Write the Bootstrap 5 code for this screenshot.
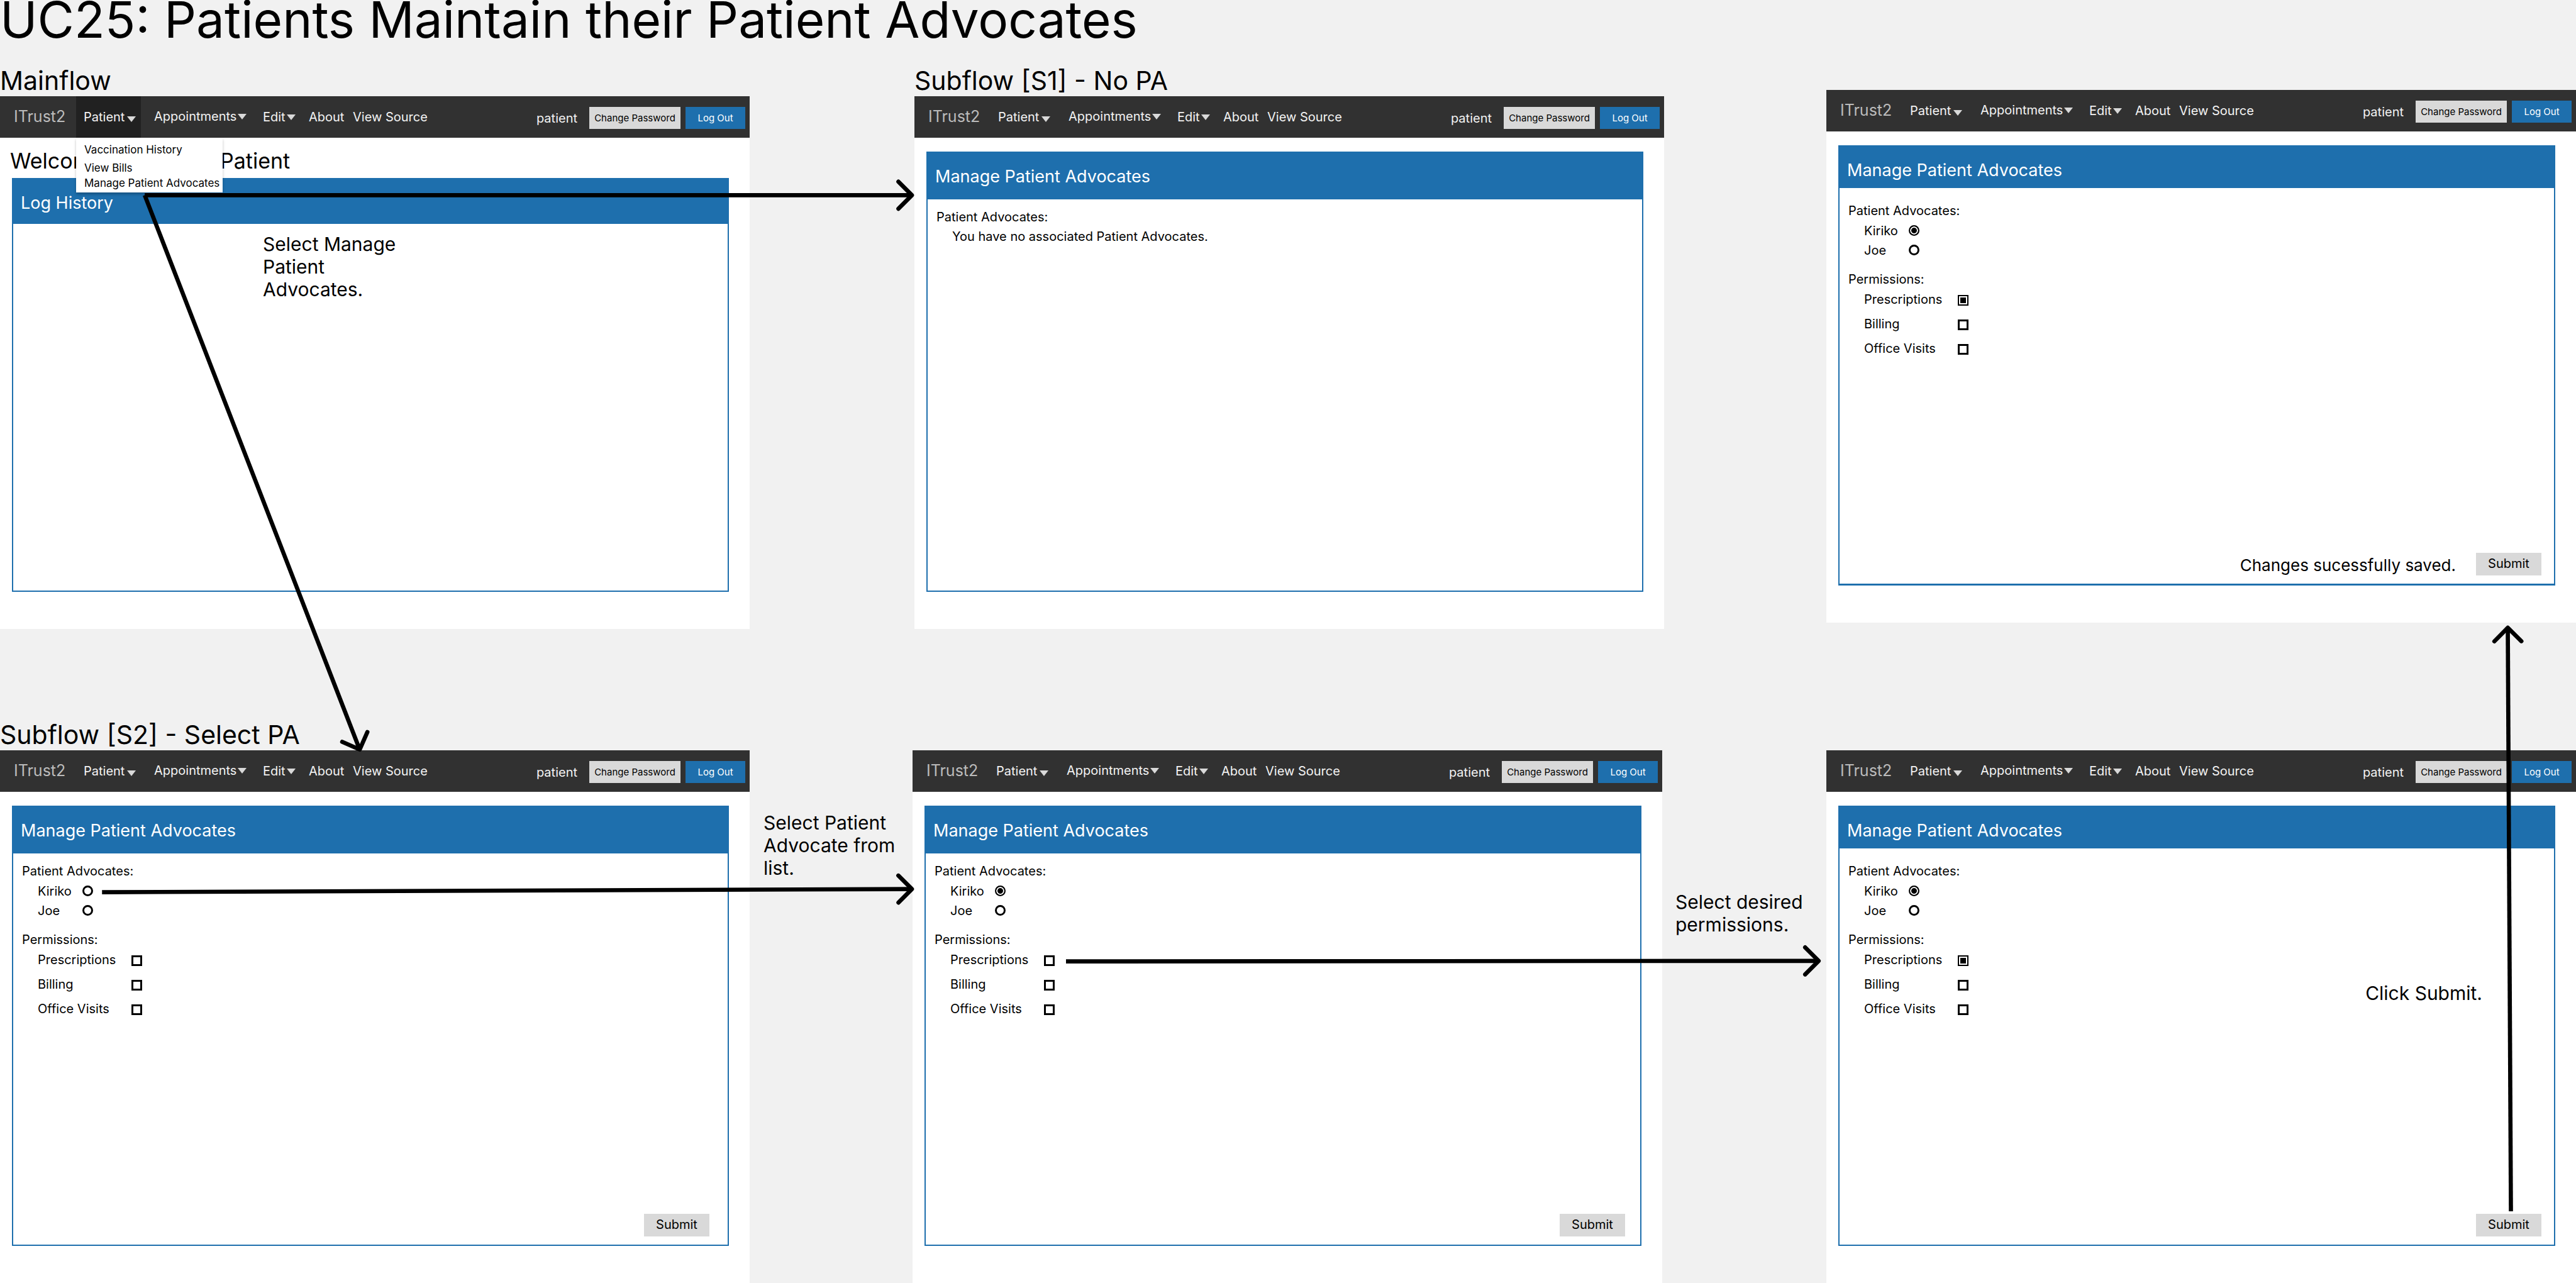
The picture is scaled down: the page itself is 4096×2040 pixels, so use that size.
<!DOCTYPE html>
<html lang="en">
<head>
<meta charset="utf-8">
<meta name="viewport" content="width=device-width, initial-scale=1">
<title>UC25: Patients Maintain their Patient Advocates</title>
<link href="https://cdn.jsdelivr.net/npm/bootstrap@5.3.0/dist/css/bootstrap.min.css" rel="stylesheet">
<style>
  body { background: #f1f1f1; color: #000; font-family: Inter, "Liberation Sans", sans-serif; font-size: 20px; line-height: 24px; }
  .board-title { font-size: 80px; line-height: 78px; font-weight: 400; margin: -8px 0 0; padding-bottom: 8px; }
  .flow-label { font-size: 41px; line-height: 48px; font-weight: 400; margin: 0; padding-top: 9px; white-space: nowrap; }
  .flow-row { align-items: flex-start; }
  .flow-top { margin-top: 17px; }
  .flow-bottom { margin-top: 135px; }
  .screen { flex: 1 1 0; min-width: 0; display: flex; flex-direction: column; }
  .label-space { height: 58px; }
  .label-space.raised { height: 48px; }
  .gutter-a { flex: 0 0 262px; }
  .gutter-b { flex: 0 0 258px; }
  .gutter-c { flex: 0 0 259px; }
  .gutter-d { flex: 0 0 261px; }
  .app { background: #fff; height: 847px; display: flex; flex-direction: column; position: relative; }

  .topbar { background: #313131; height: 66px; padding: 0 7px 0 22px; flex-wrap: nowrap; align-items: stretch; justify-content: flex-start; }
  .topbar .brand-name { color: #bbb; font-size: 25px; line-height: 32px; padding-top: 16px; width: 99px; text-decoration: none; }
  .topbar .menu-link { color: #f3f3f3; font-size: 20px; line-height: 24px; text-decoration: none; display: flex; align-items: center; white-space: nowrap; padding: 0; }
  .menu-patient { width: 103px; gap: 4px; padding-left: 12px !important; }
  .menu-patient.opened { background: #212121; }
  .menu-appts { margin-left: 21px; width: 173px; gap: 2px; padding-bottom: 2px !important; }
  .menu-edit { width: 73px; gap: 2px; }
  .menu-about { width: 70px; }
  .tri { width: 14px; height: 9px; fill: #d9d9d9; flex: none; }
  .menu-patient .tri { margin-top: 6px; }
  .who { color: #f3f3f3; font-size: 20px; line-height: 24px; padding-top: 23px; }
  .bar-btn { border: 0; border-radius: 0; height: 35px; font-size: 15px; line-height: 20px; padding: 0; margin-top: 17px; white-space: nowrap; }
  .btn-change { width: 145px; background: #d9d9d9; color: #000; margin-left: 19px; }
  .btn-logout { width: 95px; background: #1e6fad; color: #fff; margin-left: 8px; }

  .pane { border: 2px solid #1e6fad; border-radius: 0; background: #fff; margin: 22px 33px 59px 19px; flex: 1 1 auto; display: flex; flex-direction: column; position: relative; }
  .pane-thick { border-bottom-width: 3px; }
  .pane-head { background: #1e6fad; color: #fff; font-size: 27px; line-height: 32px; font-weight: 400; margin: 0; height: 74px; padding: 22px 0 0 12px; }
  .pane-head.short { height: 66px; }
  .welcome .pane { margin-top: 0; }
  .welcome .pane-head { height: 71px; }
  .welcome-line { font-size: 34px; line-height: 40px; font-weight: 400; margin: 0; height: 64px; padding: 17px 0 0 16px; display: flex; }
  .welcome-line span { width: 334px; }

  .pane-form { padding: 0 0 0 14px; margin-top: 16px; flex: 1; display: flex; flex-direction: column; }
  .pane-head.short + .pane-form { margin-top: 24px; }
  fieldset { margin: 0; }
  .group-name { font-size: 20px; line-height: 24px; margin: 0; float: none; }
  .choice { display: flex; align-items: center; padding-left: 25px; }
  .choice-radio { height: 31px; }
  .choice-radio label { width: 71px; }
  .choice-check { height: 39px; }
  .choice-check label { width: 149px; white-space: nowrap; }
  .first-group { height: 109px; }
  .radios { padding-top: 4px; }
  .choice input { appearance: none; width: 17px; height: 17px; margin: 0; border: 3px solid #000; background: #fff; flex: none; }
  .choice-check input { margin-top: 3px; }
  .choice input[type=radio] { border-radius: 50%; }
  .choice input:checked { border-width: 2px; background: #000; box-shadow: inset 0 0 0 2px #fff; }
  .submit-row { margin-top: auto; display: flex; justify-content: flex-end; align-items: flex-end; margin-bottom: 13px; margin-right: 20px; }
  .submit-row.inset { margin-right: 29px; }
  .submit-row.inset-half { margin-right: 24px; }
  .submit-row .btn-submit { width: 104px; height: 36px; border: 0; border-radius: 0; background: #d9d9d9; color: #000; font-size: 20px; line-height: 24px; padding: 0 0 2px; }
  .saved { font-size: 26px; line-height: 32px; margin: 0 32px 0 0; }
  .empty-line { padding: 7px 0 0 25px; margin: 0; }

  .drop { position: absolute; left: 121px; top: 66px; width: 233px; height: 87px; background: #fff; box-shadow: 0 3px 4px rgba(0,0,0,.25); padding: 0 0 0 13px; font-size: 17px; line-height: 24px; z-index: 2; list-style: none; margin: 0; }
  .drop a { color: #000; text-decoration: none; white-space: nowrap; display: block; }
  .drop li:first-child { padding: 7px 0 5px; }
  .remark { font-size: 30px; line-height: 36px; margin: 0; }
  .remark-manage { width: 240px; margin: 14px 0 0 397px; }
  .remark-select { padding: 97px 0 0 22px; }
  .remark-perms { padding: 223px 0 0 21px; white-space: nowrap; }
  .remark-click { margin: 0 114px 26px auto; }
  .arrows { position: absolute; left: 0; top: 0; width: 100%; z-index: 5; pointer-events: none; }
</style>
<script src="https://cdn.jsdelivr.net/npm/bootstrap@5.3.0/dist/js/bootstrap.bundle.min.js"></script>
</head>
<body class="position-relative">
<main class="overflow-hidden">
  <h1 class="board-title">UC25: Patients Maintain their Patient Advocates</h1>

  <section class="flow-row flow-top d-flex">
    <div class="screen welcome">
      <div class="label-space"><h2 class="flow-label">Mainflow</h2></div>
      <div class="app">
        <nav class="topbar navbar">
          <a class="brand-name" href="#">ITrust2</a>
          <a class="menu-link menu-patient opened" href="#">Patient<svg class="tri" viewBox="0 0 14 9"><path d="M0 0H14L7 9Z"/></svg></a>
          <a class="menu-link menu-appts" href="#">Appointments<svg class="tri" viewBox="0 0 14 9"><path d="M0 0H14L7 9Z"/></svg></a>
          <a class="menu-link menu-edit" href="#">Edit<svg class="tri" viewBox="0 0 14 9"><path d="M0 0H14L7 9Z"/></svg></a>
          <a class="menu-link menu-about" href="#">About</a>
          <a class="menu-link" href="#">View Source</a>
          <span class="who ms-auto">patient</span>
          <button class="btn bar-btn btn-change" type="button">Change Password</button>
          <button class="btn bar-btn btn-logout" type="button">Log Out</button>
        </nav>
        <ul class="drop">
          <li><a href="#">Vaccination History</a></li>
          <li><a href="#">View Bills</a></li>
          <li><a href="#">Manage Patient Advocates</a></li>
        </ul>
        <h3 class="welcome-line"><span>Welcome</span>Patient</h3>
        <div class="pane">
          <h4 class="pane-head">Log History</h4>
          <p class="remark remark-manage">Select Manage Patient Advocates.</p>
        </div>
      </div>
    </div>
    <div class="gutter-a"></div>
    <div class="screen">
      <div class="label-space"><h2 class="flow-label">Subflow [S1] - No PA</h2></div>
      <div class="app">
        <nav class="topbar navbar">
          <a class="brand-name" href="#">ITrust2</a>
          <a class="menu-link menu-patient" href="#">Patient<svg class="tri" viewBox="0 0 14 9"><path d="M0 0H14L7 9Z"/></svg></a>
          <a class="menu-link menu-appts" href="#">Appointments<svg class="tri" viewBox="0 0 14 9"><path d="M0 0H14L7 9Z"/></svg></a>
          <a class="menu-link menu-edit" href="#">Edit<svg class="tri" viewBox="0 0 14 9"><path d="M0 0H14L7 9Z"/></svg></a>
          <a class="menu-link menu-about" href="#">About</a>
          <a class="menu-link" href="#">View Source</a>
          <span class="who ms-auto">patient</span>
          <button class="btn bar-btn btn-change" type="button">Change Password</button>
          <button class="btn bar-btn btn-logout" type="button">Log Out</button>
        </nav>
        <div class="pane">
          <h4 class="pane-head">Manage Patient Advocates</h4>
          <div class="pane-form">
            <p class="group-name">Patient Advocates:</p>
            <p class="empty-line">You have no associated Patient Advocates.</p>
          </div>
        </div>
      </div>
    </div>
    <div class="gutter-b"></div>
    <div class="screen">
      <div class="label-space raised"></div>
      <div class="app">
        <nav class="topbar navbar">
          <a class="brand-name" href="#">ITrust2</a>
          <a class="menu-link menu-patient" href="#">Patient<svg class="tri" viewBox="0 0 14 9"><path d="M0 0H14L7 9Z"/></svg></a>
          <a class="menu-link menu-appts" href="#">Appointments<svg class="tri" viewBox="0 0 14 9"><path d="M0 0H14L7 9Z"/></svg></a>
          <a class="menu-link menu-edit" href="#">Edit<svg class="tri" viewBox="0 0 14 9"><path d="M0 0H14L7 9Z"/></svg></a>
          <a class="menu-link menu-about" href="#">About</a>
          <a class="menu-link" href="#">View Source</a>
          <span class="who ms-auto">patient</span>
          <button class="btn bar-btn btn-change" type="button">Change Password</button>
          <button class="btn bar-btn btn-logout" type="button">Log Out</button>
        </nav>
        <div class="pane pane-thick">
          <h4 class="pane-head short">Manage Patient Advocates</h4>
          <form class="pane-form">
            <fieldset class="first-group">
              <legend class="group-name">Patient Advocates:</legend>
              <div class="radios">
                <div class="choice choice-radio"><label for="c-k">Kiriko</label><input type="radio" name="c-pa" id="c-k" checked></div>
                <div class="choice choice-radio"><label for="c-j">Joe</label><input type="radio" name="c-pa" id="c-j"></div>
              </div>
            </fieldset>
            <fieldset>
              <legend class="group-name">Permissions:</legend>
              <div class="choice choice-check"><label for="c-p">Prescriptions</label><input type="checkbox" id="c-p" checked></div>
              <div class="choice choice-check"><label for="c-b">Billing</label><input type="checkbox" id="c-b"></div>
              <div class="choice choice-check"><label for="c-o">Office Visits</label><input type="checkbox" id="c-o"></div>
            </fieldset>
            <div class="submit-row"><p class="saved">Changes sucessfully saved.</p><button class="btn btn-submit" type="button">Submit</button></div>
          </form>
        </div>
      </div>
    </div>
  </section>

  <section class="flow-row flow-bottom d-flex">
    <div class="screen">
      <div class="label-space"><h2 class="flow-label">Subflow [S2] - Select PA</h2></div>
      <div class="app">
        <nav class="topbar navbar">
          <a class="brand-name" href="#">ITrust2</a>
          <a class="menu-link menu-patient" href="#">Patient<svg class="tri" viewBox="0 0 14 9"><path d="M0 0H14L7 9Z"/></svg></a>
          <a class="menu-link menu-appts" href="#">Appointments<svg class="tri" viewBox="0 0 14 9"><path d="M0 0H14L7 9Z"/></svg></a>
          <a class="menu-link menu-edit" href="#">Edit<svg class="tri" viewBox="0 0 14 9"><path d="M0 0H14L7 9Z"/></svg></a>
          <a class="menu-link menu-about" href="#">About</a>
          <a class="menu-link" href="#">View Source</a>
          <span class="who ms-auto">patient</span>
          <button class="btn bar-btn btn-change" type="button">Change Password</button>
          <button class="btn bar-btn btn-logout" type="button">Log Out</button>
        </nav>
        <div class="pane">
          <h4 class="pane-head">Manage Patient Advocates</h4>
          <form class="pane-form">
            <fieldset class="first-group">
              <legend class="group-name">Patient Advocates:</legend>
              <div class="radios">
                <div class="choice choice-radio"><label for="d-k">Kiriko</label><input type="radio" name="d-pa" id="d-k"></div>
                <div class="choice choice-radio"><label for="d-j">Joe</label><input type="radio" name="d-pa" id="d-j"></div>
              </div>
            </fieldset>
            <fieldset>
              <legend class="group-name">Permissions:</legend>
              <div class="choice choice-check"><label for="d-p">Prescriptions</label><input type="checkbox" id="d-p"></div>
              <div class="choice choice-check"><label for="d-b">Billing</label><input type="checkbox" id="d-b"></div>
              <div class="choice choice-check"><label for="d-o">Office Visits</label><input type="checkbox" id="d-o"></div>
            </fieldset>
            <div class="submit-row inset"><button class="btn btn-submit" type="button">Submit</button></div>
          </form>
        </div>
      </div>
    </div>
    <div class="gutter-c"><div class="label-space"></div><p class="remark remark-select">Select Patient Advocate from list.</p></div>
    <div class="screen">
      <div class="label-space"></div>
      <div class="app">
        <nav class="topbar navbar">
          <a class="brand-name" href="#">ITrust2</a>
          <a class="menu-link menu-patient" href="#">Patient<svg class="tri" viewBox="0 0 14 9"><path d="M0 0H14L7 9Z"/></svg></a>
          <a class="menu-link menu-appts" href="#">Appointments<svg class="tri" viewBox="0 0 14 9"><path d="M0 0H14L7 9Z"/></svg></a>
          <a class="menu-link menu-edit" href="#">Edit<svg class="tri" viewBox="0 0 14 9"><path d="M0 0H14L7 9Z"/></svg></a>
          <a class="menu-link menu-about" href="#">About</a>
          <a class="menu-link" href="#">View Source</a>
          <span class="who ms-auto">patient</span>
          <button class="btn bar-btn btn-change" type="button">Change Password</button>
          <button class="btn bar-btn btn-logout" type="button">Log Out</button>
        </nav>
        <div class="pane">
          <h4 class="pane-head">Manage Patient Advocates</h4>
          <form class="pane-form">
            <fieldset class="first-group">
              <legend class="group-name">Patient Advocates:</legend>
              <div class="radios">
                <div class="choice choice-radio"><label for="e-k">Kiriko</label><input type="radio" name="e-pa" id="e-k" checked></div>
                <div class="choice choice-radio"><label for="e-j">Joe</label><input type="radio" name="e-pa" id="e-j"></div>
              </div>
            </fieldset>
            <fieldset>
              <legend class="group-name">Permissions:</legend>
              <div class="choice choice-check"><label for="e-p">Prescriptions</label><input type="checkbox" id="e-p"></div>
              <div class="choice choice-check"><label for="e-b">Billing</label><input type="checkbox" id="e-b"></div>
              <div class="choice choice-check"><label for="e-o">Office Visits</label><input type="checkbox" id="e-o"></div>
            </fieldset>
            <div class="submit-row inset-half"><button class="btn btn-submit" type="button">Submit</button></div>
          </form>
        </div>
      </div>
    </div>
    <div class="gutter-d"><div class="label-space"></div><p class="remark remark-perms">Select desired<br>permissions.</p></div>
    <div class="screen">
      <div class="label-space"></div>
      <div class="app">
        <nav class="topbar navbar">
          <a class="brand-name" href="#">ITrust2</a>
          <a class="menu-link menu-patient" href="#">Patient<svg class="tri" viewBox="0 0 14 9"><path d="M0 0H14L7 9Z"/></svg></a>
          <a class="menu-link menu-appts" href="#">Appointments<svg class="tri" viewBox="0 0 14 9"><path d="M0 0H14L7 9Z"/></svg></a>
          <a class="menu-link menu-edit" href="#">Edit<svg class="tri" viewBox="0 0 14 9"><path d="M0 0H14L7 9Z"/></svg></a>
          <a class="menu-link menu-about" href="#">About</a>
          <a class="menu-link" href="#">View Source</a>
          <span class="who ms-auto">patient</span>
          <button class="btn bar-btn btn-change" type="button">Change Password</button>
          <button class="btn bar-btn btn-logout" type="button">Log Out</button>
        </nav>
        <div class="pane">
          <h4 class="pane-head short">Manage Patient Advocates</h4>
          <form class="pane-form">
            <div class="d-flex">
              <div>
                <fieldset class="first-group">
                  <legend class="group-name">Patient Advocates:</legend>
                  <div class="radios">
                    <div class="choice choice-radio"><label for="f-k">Kiriko</label><input type="radio" name="f-pa" id="f-k" checked></div>
                    <div class="choice choice-radio"><label for="f-j">Joe</label><input type="radio" name="f-pa" id="f-j"></div>
                  </div>
                </fieldset>
                <fieldset>
                  <legend class="group-name">Permissions:</legend>
                  <div class="choice choice-check"><label for="f-p">Prescriptions</label><input type="checkbox" id="f-p" checked></div>
                  <div class="choice choice-check"><label for="f-b">Billing</label><input type="checkbox" id="f-b"></div>
                  <div class="choice choice-check"><label for="f-o">Office Visits</label><input type="checkbox" id="f-o"></div>
                </fieldset>
              </div>
              <p class="remark remark-click align-self-end">Click Submit.</p>
            </div>
            <div class="submit-row"><button class="btn btn-submit" type="button">Submit</button></div>
          </form>
        </div>
      </div>
    </div>
  </section>
</main>

<svg class="arrows" viewBox="0 0 4949 2465" fill="none" stroke="#000" stroke-width="8" aria-hidden="true">
  <defs>
    <marker id="head" markerUnits="userSpaceOnUse" markerWidth="80" markerHeight="80" viewBox="-50 -40 80 80" refX="0" refY="0" orient="auto" overflow="visible">
      <path d="M-26 -26L0 0L-26 26" stroke="#000" stroke-width="8" stroke-linecap="round" stroke-linejoin="round"/>
    </marker>
  </defs>
  <path d="M278 375H1752" marker-end="url(#head)"/>
  <path d="M278 375L691 1440" marker-end="url(#head)"/>
  <path d="M196 1714L1752 1708" marker-end="url(#head)"/>
  <path d="M2048 1847L3494 1846" marker-end="url(#head)"/>
  <path d="M4824 2327L4818 1206" marker-end="url(#head)"/>
</svg>
</body>
</html>
